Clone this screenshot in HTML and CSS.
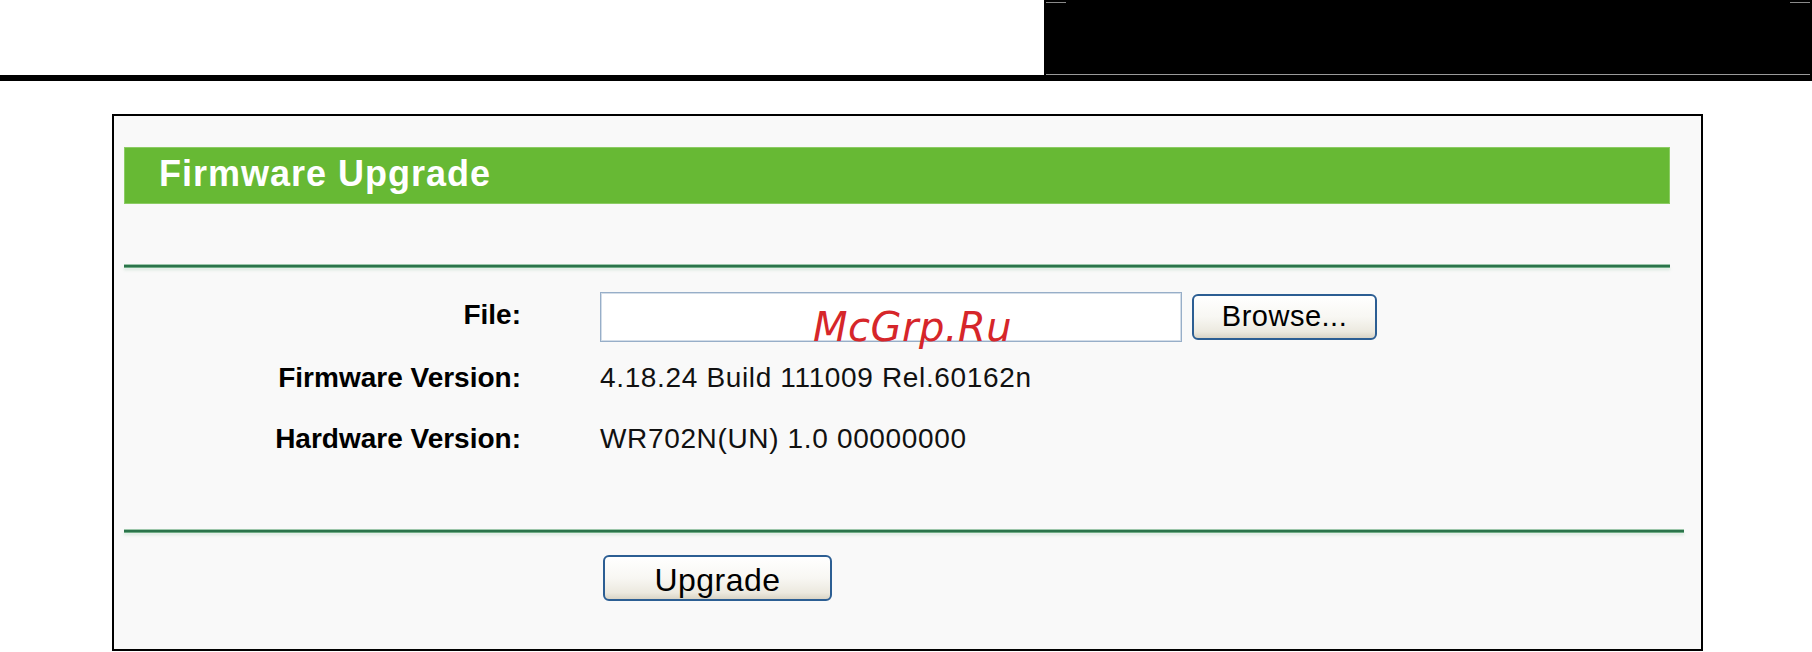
FILE: index.html
```html
<!DOCTYPE html>
<html>
<head>
<meta charset="utf-8">
<title>Firmware Upgrade</title>
<link rel="stylesheet" href="styles.css">
</head>
<body>
<div class="topbar">
  <div class="blackbox"><span class="dash dash-right"></span></div>
</div>
<div class="rule"></div>
<div class="frame">
  <div class="title">Firmware Upgrade</div>
  <div class="sep sep-top"></div>
  <div class="form">
    <div class="row row-file">
      <div class="label">File:</div>
      <div class="value">
        <span class="file-input"></span>
        <button class="btn btn-browse">Browse...</button>
      </div>
    </div>
    <div class="row">
      <div class="label">Firmware Version:</div>
      <div class="value">4.18.24 Build 111009 Rel.60162n</div>
    </div>
    <div class="row">
      <div class="label">Hardware Version:</div>
      <div class="value">WR702N(UN) 1.0 00000000</div>
    </div>
  </div>
  <div class="sep sep-bottom"></div>
  <div class="actions">
    <button class="btn btn-upgrade">Upgrade</button>
  </div>
  <div class="watermark">McGrp.Ru</div>
</div>
</body>
</html>
```
FILE: styles.css
```css
body {
  margin: 0;
  background: #ffffff;
  font-family: "Liberation Sans", Arial, sans-serif;
  color: #000;
}

.topbar {
  height: 75px;
  display: flex;
  justify-content: flex-end;
}

.blackbox {
  width: 768px;
  background: #000;
  position: relative;
}

.blackbox::before {
  content: "";
  position: absolute;
  left: 2px;
  top: 2px;
  width: 20px;
  height: 1px;
  background: #8a8a8a;
}

.blackbox::after {
  content: "";
  position: absolute;
  left: 2px;
  right: 2px;
  bottom: 0;
  height: 1px;
  background: #9a9a9a;
}

.dash-right {
  position: absolute;
  right: 2px;
  top: 2px;
  width: 20px;
  height: 1px;
  background: #8a8a8a;
}

.rule {
  height: 6px;
  background: #000;
}

.frame {
  position: relative;
  margin: 33px 0 0 112px;
  width: 1591px;
  height: 537px;
  box-sizing: border-box;
  border: 2px solid #000;
  background: #f9f9f9;
  padding-top: 31px;
}

.title {
  margin-left: 10px;
  width: 1546px;
  height: 57px;
  box-sizing: border-box;
  background: #67b934;
  box-shadow: inset 0 0 0 1px #8ccc64;
  color: #fff;
  font-weight: bold;
  font-size: 36px;
  letter-spacing: 1px;
  line-height: 53px;
  padding: 0 0 4px 35px;
}

.sep {
  height: 2px;
  margin-left: 10px;
  background: #2b744b;
  box-shadow: 0 -1px 0 #9cc6aa, 0 1px 0 #6fab85, 0 3px 3px rgba(120, 180, 140, 0.3);
}

.sep-top {
  width: 1546px;
  margin-top: 61px;
}

.sep-bottom {
  width: 1560px;
  margin-top: 61px;
}

.form {
  margin: 25px 0 0 10px;
}

.row {
  display: flex;
  height: 61px;
  font-size: 28px;
  line-height: 61px;
}

.row-file {
  height: 50px;
  margin-bottom: 5px;
}

.row-file .label {
  line-height: 45px;
}

.label {
  flex: none;
  width: 397px;
  text-align: right;
  font-weight: bold;
}

.value {
  margin-left: 79px;
  letter-spacing: 0.65px;
  color: #111;
  display: flex;
  align-items: center;
}

.file-input {
  display: block;
  width: 582px;
  height: 50px;
  box-sizing: border-box;
  border: 1px solid #97aec8;
  box-shadow: inset 0 0 0 1px #d3dde8;
  background: #fff;
}

.btn {
  font-family: "Liberation Sans", Arial, sans-serif;
  color: #000;
  border: 2px solid #2c5e93;
  border-radius: 6px;
  background: linear-gradient(#ffffff 0%, #f8f7f3 50%, #ece9df 85%, #d9d4c6 100%);
  padding: 0;
  letter-spacing: 0.5px;
  box-sizing: border-box;
}

.row .btn-browse {
  width: 185px;
  height: 46px;
  margin-left: 10px;
  font-size: 29px;
  line-height: 40px;
  padding-bottom: 4px;
  letter-spacing: 0.5px;
}

.actions {
  margin: 23px 0 0 489px;
}

.btn-upgrade {
  display: block;
  width: 229px;
  height: 46px;
  font-size: 32px;
  line-height: 38px;
  padding-top: 4px;
}

.watermark {
  position: absolute;
  left: 699px;
  top: 191px;
  font-family: "DejaVu Sans", Verdana, sans-serif;
  font-style: italic;
  font-size: 40px;
  line-height: 40px;
  letter-spacing: 0.5px;
  color: #d6262a;
}
```
